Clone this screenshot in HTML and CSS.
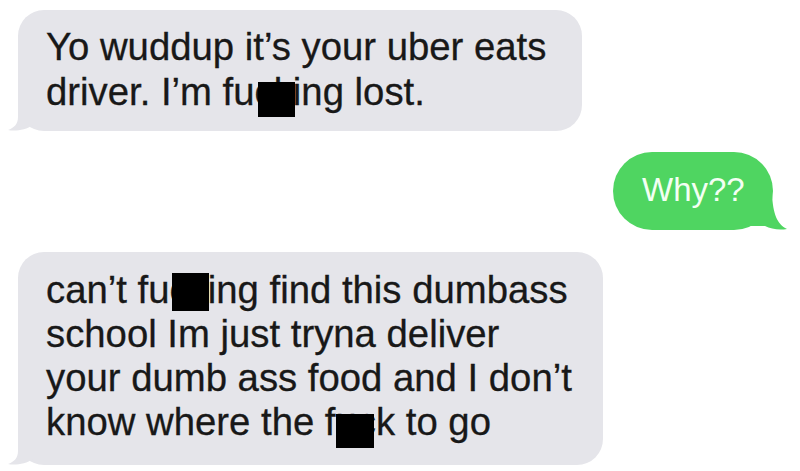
FILE: index.html
```html
<!DOCTYPE html>
<html>
<head>
<meta charset="utf-8">
<link rel="stylesheet" href="styles.css">
</head>
<body>
<div class="thread">
  <div class="bubble received b1">
    <span class="line">Yo wuddup it’s your uber eats</span>
    <span class="line">driver. I’m fu<span class="censor c1">ck</span>ing lost.</span>
    <svg class="tail tail-left" viewBox="-12 -34 40 36" width="40" height="36"><path d="M0 -34 L0 -14 C0 -7 -4 -3 -10 -1 C-3 0.5 8 -1 15 -6 L15 -34 Z"/></svg>
  </div>
  <div class="bubble sent">
    <span class="line">Why??</span>
    <svg class="tail tail-right" viewBox="-30 -36 46 38" width="46" height="38"><path d="M-1 -36 C0 -16 4 -6 14 -1 C6 0.5 -2 -1 -8 -4 L-30 -4 L-30 -36 Z"/></svg>
  </div>
  <div class="bubble received b3">
    <span class="line">can’t fu<span class="censor c2">ck</span>ing find this dumbass</span>
    <span class="line">school Im just tryna deliver</span>
    <span class="line">your dumb ass food and I don’t</span>
    <span class="line">know where the f<span class="censor c3">uc</span>k to go</span>
    <svg class="tail tail-left" viewBox="-12 -34 40 36" width="40" height="36"><path d="M0 -34 L0 -14 C0 -7 -4 -3 -10 -1 C-3 0.5 8 -1 15 -6 L15 -34 Z"/></svg>
  </div>
</div>
</body>
</html>
```
FILE: styles.css
```css
html, body {
  margin: 0;
  padding: 0;
  background: #ffffff;
}
body {
  width: 800px;
  height: 471px;
  overflow: hidden;
  font-family: "Liberation Sans", Arial, sans-serif;
}
.thread {
  display: flex;
  flex-direction: column;
  align-items: flex-start;
  padding-top: 10px;
}
.bubble {
  position: relative;
  display: flex;
  flex-direction: column;
  box-sizing: border-box;
  white-space: nowrap;
}
.line {
  display: block;
}
.received {
  background: #e5e5ea;
  color: #181818;
  -webkit-text-stroke: 0.3px #181818;
  border-radius: 26px;
  margin-left: 18px;
  font-size: 38.3px;
  padding: 0 20px 0 28px;
}
.b1 {
  width: 564px;
  height: 121px;
  line-height: 45px;
  padding-top: 14px;
}
.b3 {
  width: 585px;
  height: 213px;
  margin-top: 22px;
  line-height: 44px;
  padding-top: 16px;
}
.sent {
  align-self: flex-end;
  margin-right: 27px;
  margin-top: 21px;
  width: 160px;
  height: 78px;
  background: #4fd561;
  color: #f3fff3;
  border-radius: 39px;
  font-size: 33px;
  line-height: 40px;
  padding: 18px 0 20px 29px;
}
.tail {
  position: absolute;
  bottom: -2px;
}
.tail-left {
  left: -12px;
  fill: #e5e5ea;
}
.tail-right {
  right: -16px;
  fill: #4fd561;
}
.censor {
  position: relative;
}
.censor::after {
  content: "";
  position: absolute;
  background: #000;
}
.c1::after {
  left: 3px;
  right: -2px;
  top: 12px;
  bottom: -4px;
}
.c2::after {
  left: 3px;
  right: -1px;
  top: 5px;
  bottom: 0;
}
.c3::after {
  left: 0;
  right: 2px;
  top: 14px;
  bottom: -5px;
}
```
